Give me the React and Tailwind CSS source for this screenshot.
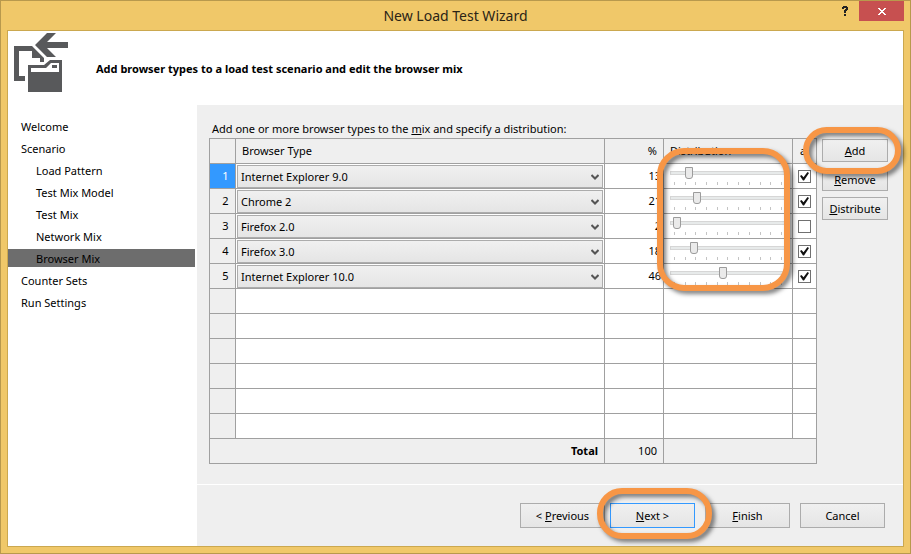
import { useState } from "react";

const STEPS = [
  { label: "Welcome" },
  { label: "Scenario" },
  { label: "Load Pattern", nested: true },
  { label: "Test Mix Model", nested: true },
  { label: "Test Mix", nested: true },
  { label: "Network Mix", nested: true },
  { label: "Browser Mix", nested: true, current: true },
  { label: "Counter Sets" },
  { label: "Run Settings" },
];

const BROWSERS = ["Internet Explorer 9.0", "Internet Explorer 10.0", "Chrome 2", "Firefox 2.0", "Firefox 3.0"];

const INITIAL_MIX = [
  { browser: "Internet Explorer 9.0", share: 13, locked: true },
  { browser: "Chrome 2", share: 21, locked: true },
  { browser: "Firefox 2.0", share: 2, locked: false },
  { browser: "Firefox 3.0", share: 18, locked: true },
  { browser: "Internet Explorer 10.0", share: 46, locked: true },
];

const EMPTY_ROWS = [6, 7, 8, 9, 10, 11];
const TICKS = [0, 10, 20, 30, 40, 50, 60, 70, 80, 90, 100];

const CELL = "h-[25px] border-r border-b border-[#a0a0a0] p-0";
const BUTTON = "border border-[#acacac] bg-linear-to-b from-[#f0f0f0] to-[#e5e5e5] text-center";
const RING =
  "pointer-events-none absolute border-6 border-[#f79646] drop-shadow-[3px_3px_2px_rgba(0,0,0,0.5)]";

function WizardIcon() {
  return (
    <svg width="54" height="60" viewBox="0 0 54 60" fill="#58595b" aria-hidden="true">
      <path d="M0 13H18L30 25V29H26V25H18V18H5V43H11V48H0Z" />
      <path d="M21 12L33 0H42L33 9H54V15H33L42 24H33Z" />
      <path fillRule="evenodd" d="M14 32H30L36 27H48V59H14ZM17 35V39H45V30H37L32 35ZM38 32H43V35H38Z" />
    </svg>
  );
}

function TitleBar() {
  return (
    <header className="relative flex h-[29px] items-center justify-center">
      <h1 className="text-[14px] leading-5 text-[#2b2416]">New Load Test Wizard</h1>
      <div className="absolute top-0 right-1.5 flex items-start">
        <button type="button" aria-label="Help" className="flex h-5 w-7 items-center justify-center">
          <svg width="6" height="10" viewBox="0 0 6 10" fill="#222" shapeRendering="crispEdges">
            <path d="M1 0H5V1H6V4H5V5H4V7H2V4H3V3H4V2H2V3H0V1H1ZM2 8H4V10H2Z" />
          </svg>
        </button>
        <button type="button" aria-label="Close" className="flex h-5 w-[45px] items-center justify-center bg-[#c75050]">
          <svg width="8" height="7" viewBox="0 0 8 7" fill="#fff" shapeRendering="crispEdges">
            <path d="M0 0H2V1H3V2H5V1H6V0H8V1H7V2H6V3H5V4H6V5H7V6H8V7H6V6H5V5H3V6H2V7H0V6H1V5H2V4H3V3H2V2H1V1H0Z" />
          </svg>
        </button>
      </div>
    </header>
  );
}

function Sidebar() {
  return (
    <nav aria-label="Wizard steps" className="w-[189px] shrink-0 bg-white pt-3 pr-0.5">
      <ul className="flex flex-col gap-1">
        {STEPS.map((step) => (
          <li key={step.label}>
            <a
              href="#"
              aria-current={step.current ? "step" : undefined}
              className={`block h-[18px] leading-5 ${step.nested ? "pl-7" : "pl-[13px]"} ${
                step.current ? "bg-[#6d6d6d]" : ""
              }`}
            >
              {step.label}
            </a>
          </li>
        ))}
      </ul>
    </nav>
  );
}

function BrowserSelect({ row, value, onChange }) {
  return (
    <div className="relative pt-px pr-px pl-px">
      <select
        aria-label={`Browser type ${row}`}
        value={value}
        onChange={(e) => onChange(e.target.value)}
        className="block h-[23px] w-full appearance-none border border-[#acacac] bg-linear-to-b from-[#f0f0f0] to-[#e5e5e5] pl-[3px]"
      >
        {BROWSERS.map((name) => (
          <option key={name}>{name}</option>
        ))}
      </select>
      <svg
        className="pointer-events-none absolute top-[10px] right-[5px]"
        width="8"
        height="6"
        viewBox="0 0 8 6"
        fill="none"
        stroke="#555"
        strokeWidth="2"
      >
        <path d="M0.5 1L4 4.5L7.5 1" />
      </svg>
    </div>
  );
}

function ShareSlider({ row, value, onChange }) {
  return (
    <div className="ml-1.5 h-6 w-[114px] overflow-hidden pt-[3px]">
      <input
        type="range"
        aria-label={`Distribution ${row}`}
        min="0"
        max="100"
        value={value}
        onChange={(e) => onChange(Number(e.target.value))}
        className="block h-3 w-[115px] appearance-none bg-transparent [&::-webkit-slider-runnable-track]:h-1 [&::-webkit-slider-runnable-track]:border [&::-webkit-slider-runnable-track]:border-[#d6d6d6] [&::-webkit-slider-runnable-track]:bg-[#e7eaea] [&::-webkit-slider-thumb]:-mt-[5px] [&::-webkit-slider-thumb]:h-3 [&::-webkit-slider-thumb]:w-2 [&::-webkit-slider-thumb]:appearance-none [&::-webkit-slider-thumb]:rounded-b-[3px] [&::-webkit-slider-thumb]:border [&::-webkit-slider-thumb]:border-[#9c9c9c] [&::-webkit-slider-thumb]:bg-[#eaeaea]"
      />
      <div className="mt-[3px] ml-1 flex w-[108px] justify-between">
        {TICKS.map((tick) => (
          <span key={tick} className="h-[3px] w-px bg-[#c4c4c4]" />
        ))}
      </div>
    </div>
  );
}

function LockBox({ row, checked, onChange }) {
  return (
    <div className="grid place-items-center">
      <input
        type="checkbox"
        aria-label={`Lock row ${row}`}
        checked={checked}
        onChange={(e) => onChange(e.target.checked)}
        className="col-start-1 row-start-1 size-[13px] appearance-none border border-[#707070] bg-white"
      />
      {checked && (
        <svg className="pointer-events-none col-start-1 row-start-1" width="9" height="9" viewBox="0 0 9 9">
          <path d="M0 4L1.5 3L3.5 5.2L7.5 0L9 1L4 8.5H3Z" fill="#111" />
        </svg>
      )}
    </div>
  );
}

function MixTable({ mix, update }) {
  const total = mix.reduce((sum, row) => sum + row.share, 0);
  return (
    <table
      aria-labelledby="mix-label"
      className="w-full table-fixed border-separate border-spacing-0 border-t border-l border-[#a0a0a0]"
    >
      <colgroup>
        <col className="w-[26px]" />
        <col />
        <col className="w-[59px]" />
        <col className="w-[129px]" />
        <col className="w-6" />
      </colgroup>
      <thead>
        <tr className="text-left">
          <th className={CELL} />
          <th className={`${CELL} font-normal`}><span className="pl-1.5">Browser Type</span></th>
          <th className={`${CELL} text-right font-normal`}><span className="pr-1.5">%</span></th>
          <th className={`${CELL} font-normal`}><span className="pl-1.5">Distribution</span></th>
          <th className={`${CELL} font-normal`}><span className="pl-[7px]">a</span></th>
        </tr>
      </thead>
      <tbody className="bg-white">
        {mix.map((row, i) => (
          <tr key={i}>
            <td className={`${CELL} ${i === 0 ? "bg-[#3399ff] text-white" : "bg-[#efefef]"}`}>
              <span className="block pl-1.5 text-center">{i + 1}</span>
            </td>
            <td className={CELL}>
              <BrowserSelect row={i + 1} value={row.browser} onChange={(browser) => update(i, { browser })} />
            </td>
            <td className={`${CELL} text-right`}><span className="pr-0.5">{row.share}</span></td>
            <td className={CELL}>
              <ShareSlider row={i + 1} value={row.share} onChange={(share) => update(i, { share })} />
            </td>
            <td className={CELL}>
              <LockBox row={i + 1} checked={row.locked} onChange={(locked) => update(i, { locked })} />
            </td>
          </tr>
        ))}
        {EMPTY_ROWS.map((n) => (
          <tr key={n}>
            <td className={`${CELL} bg-[#efefef]`} />
            <td className={CELL} />
            <td className={CELL} />
            <td className={CELL} />
            <td className={CELL} />
          </tr>
        ))}
      </tbody>
      <tfoot>
        <tr className="text-right">
          <th colSpan={2} className={`${CELL} font-bold`}><span className="pr-1.5">Total</span></th>
          <td className={CELL}><span className="pr-1.5">{total}</span></td>
          <td colSpan={2} className={CELL} />
        </tr>
      </tfoot>
    </table>
  );
}

export default function App() {
  const [mix, setMix] = useState(INITIAL_MIX);
  const update = (index, change) =>
    setMix((rows) => rows.map((row, i) => (i === index ? { ...row, ...change } : row)));

  return (
    <div className="flex min-h-screen flex-col border border-[#b8994d] bg-[#f0c869] font-['Noto_Sans','Open_Sans',sans-serif] text-[11px] leading-4 text-black">
      <TitleBar />
      <div className="mx-1.5 mb-1.5 flex flex-1 flex-col border border-[#cba84f] bg-[#efefef]">
        <div className="flex h-[74px] items-start bg-white pt-0.5 pl-1.5">
          <WizardIcon />
          <h2 className="ml-7 self-center font-bold">Add browser types to a load test scenario and edit the browser mix</h2>
        </div>
        <div className="flex flex-1">
          <Sidebar />
          <main className="flex min-w-0 flex-1 flex-col">
            <section className="flex-1 pt-4 pr-[15px] pb-5 pl-3">
              <p id="mix-label" className="h-[17px] pl-[3px] leading-4">
                Add one or more browser types to the <u>m</u>ix and specify a distribution:
              </p>
              <div className="flex items-start gap-[5px]">
                <div className="relative min-w-0 flex-1">
                  <MixTable mix={mix} update={update} />
                  <div className={`${RING} top-[10px] right-[27px] h-[143px] w-[133px] rounded-[27px]`} />
                </div>
                <div className="flex w-[66px] flex-col gap-1.5 pt-px">
                  <div className="relative z-10 flex">
                    <button type="button" className={`${BUTTON} h-[23px] flex-1`}><u>A</u>dd</button>
                    <div className={`${RING} -inset-y-3 -right-[13px] -left-[19px] rounded-full`} />
                  </div>
                  <button type="button" className={`${BUTTON} h-[23px]`}><u>R</u>emove</button>
                  <button type="button" className={`${BUTTON} h-[23px]`}><u>D</u>istribute</button>
                </div>
              </div>
            </section>
            <footer className="flex justify-end gap-2.5 border-t border-white pt-[18px] pr-[18px] pb-[18px]">
              <div className="flex gap-[5px]">
                <button type="button" className={`${BUTTON} h-[25px] w-[85px]`}>&lt; <u>P</u>revious</button>
                <div className="relative z-10 flex">
                  <button type="button" className="h-[25px] w-[85px] border border-[#3399ff] bg-linear-to-b from-[#f0f0f0] to-[#e5e5e5] text-center">
                    <u>N</u>ext &gt;
                  </button>
                  <div className={`${RING} -top-[15px] -right-[17px] -bottom-[11px] -left-[13px] rounded-[25px]`} />
                </div>
              </div>
              <button type="button" className={`${BUTTON} h-[25px] w-[85px]`}><u>F</u>inish</button>
              <button type="button" className={`${BUTTON} h-[25px] w-[85px]`}>Cancel</button>
            </footer>
          </main>
        </div>
      </div>
    </div>
  );
}
